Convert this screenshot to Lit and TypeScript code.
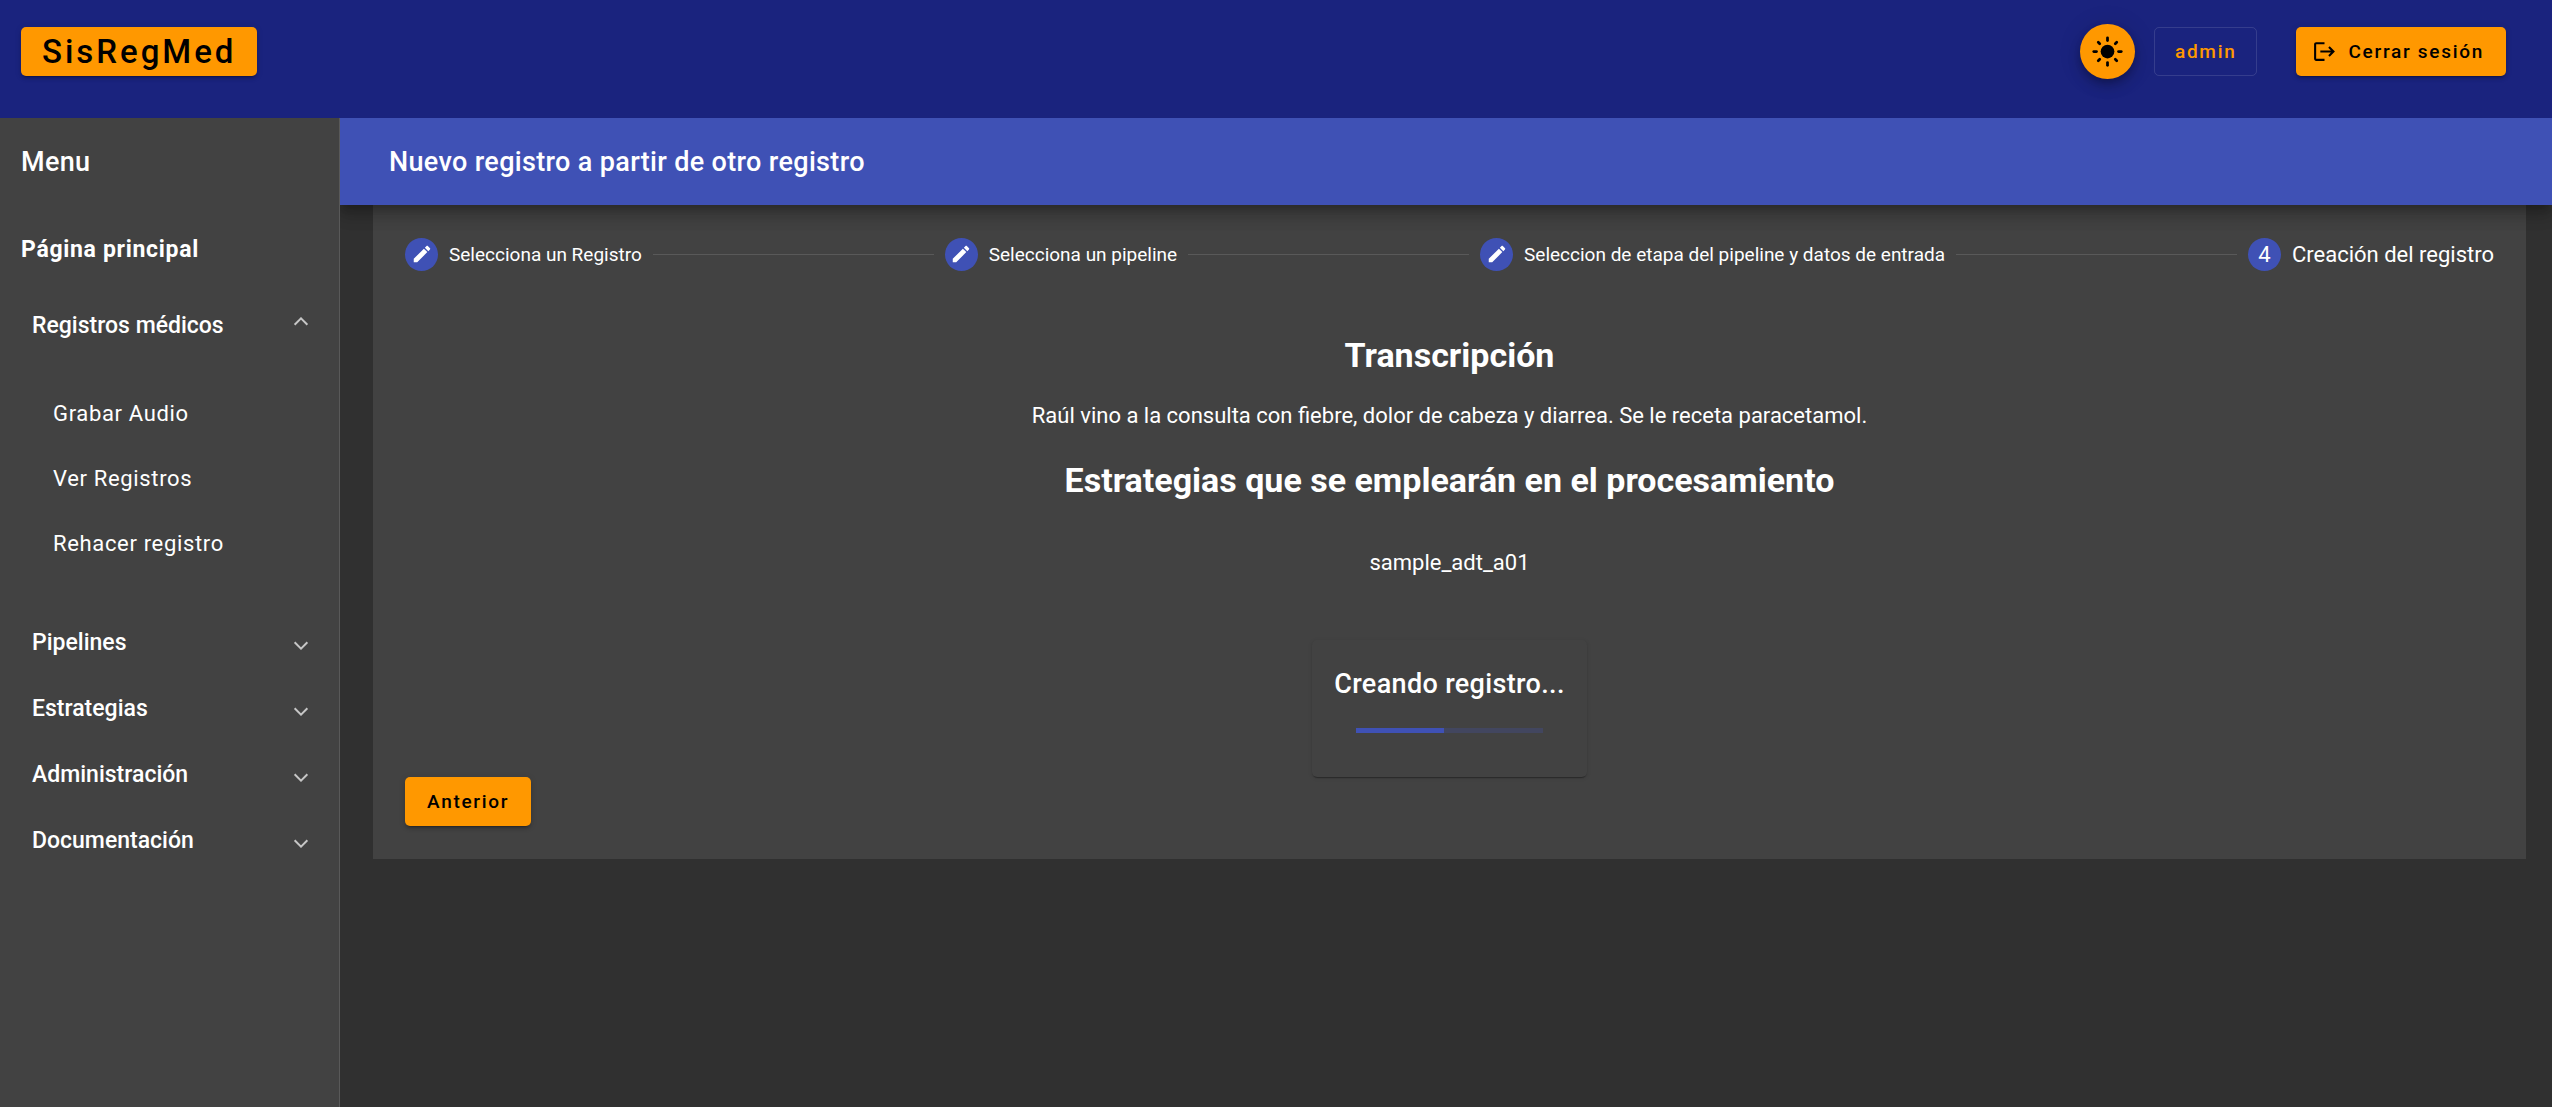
import { LitElement, html, css, svg } from "lit";
import { customElement, state } from "lit/decorators.js";

interface Step {
  label: string;
  done: boolean;
}

interface Section {
  title: string;
  links: string[];
}

const STEPS: Step[] = [
  { label: "Selecciona un Registro", done: true },
  { label: "Selecciona un pipeline", done: true },
  { label: "Seleccion de etapa del pipeline y datos de entrada", done: true },
  { label: "Creación del registro", done: false },
];

const SECTIONS: Section[] = [
  {
    title: "Registros médicos",
    links: ["Grabar Audio", "Ver Registros", "Rehacer registro"],
  },
  { title: "Pipelines", links: [] },
  { title: "Estrategias", links: [] },
  { title: "Administración", links: [] },
  { title: "Documentación", links: [] },
];

const sunIcon = html`<svg class="icon-sun" viewBox="0 0 24 24" aria-hidden="true">
  <circle cx="12" cy="12" r="5" fill="currentColor" />
  ${[0, 90, 180, 270].map(
    (a) => svg`<path d="M12 2v2" transform=${`rotate(${a} 12 12)`}
      stroke="currentColor" stroke-width="2" stroke-linecap="round" />`
  )}
  ${[45, 135, 225, 315].map(
    (a) => svg`<path d="M12 2.5v1.5" transform=${`rotate(${a} 12 12)`}
      stroke="currentColor" stroke-width="2" stroke-linecap="round" />`
  )}
</svg>`;

const logoutIcon = html`<svg class="icon-logout" viewBox="0 0 24 24" aria-hidden="true">
  <path fill="currentColor"
    d="M17 7l-1.41 1.41L18.17 11H8v2h10.17l-2.58 2.58L17 17l5-5zM4 5h8V3H4c-1.1 0-2 .9-2 2v14c0 1.1.9 2 2 2h8v-2H4V5z" />
</svg>`;

const pencilIcon = html`<svg class="icon-pencil" viewBox="0 0 24 24" aria-hidden="true">
  <path fill="currentColor"
    d="M3 17.25V21h3.75L17.81 9.94l-3.75-3.75L3 17.25zM20.71 7.04c.39-.39.39-1.02 0-1.41l-2.34-2.34c-.39-.39-1.02-.39-1.41 0l-1.83 1.83 3.75 3.75 1.83-1.83z" />
</svg>`;

const base = css`
  * {
    box-sizing: border-box;
  }
  h1,
  h2,
  p,
  ul,
  ol {
    margin: 0;
    padding: 0;
    list-style: none;
  }
  a {
    color: inherit;
    text-decoration: none;
  }
  button {
    margin: 0;
    font: inherit;
    cursor: pointer;
  }
  .btn {
    display: inline-flex;
    align-items: center;
    justify-content: center;
    height: 49px;
    padding: 0 22px;
    border: 0;
    border-radius: 5px;
    font-size: 19px;
    font-weight: 500;
    letter-spacing: 0.09em;
    white-space: nowrap;
  }
  .raised {
    background: #ff9800;
    color: #000;
    box-shadow: 0 4px 1px -3px rgba(0, 0, 0, 0.2), 0 3px 3px rgba(0, 0, 0, 0.14),
      0 1px 7px rgba(0, 0, 0, 0.12);
  }
`;

@customElement("app-topbar")
export class AppTopbar extends LitElement {
  static styles = [
    base,
    css`
      :host {
        display: flex;
        align-items: flex-start;
        justify-content: space-between;
        height: 118px;
        padding: 24px 46px 0 21px;
        background: #1a237e;
      }
      .brand {
        margin-top: 3px;
        padding: 0 21px;
        font-size: 33px;
        letter-spacing: 0.09em;
      }
      .tools {
        display: flex;
        align-items: center;
      }
      .theme {
        display: grid;
        place-items: center;
        width: 55px;
        height: 55px;
        margin-right: 19px;
        padding: 0;
        border: 0;
        border-radius: 50%;
        background: #ff9800;
        color: #000;
        box-shadow: 0 4px 7px -1px rgba(0, 0, 0, 0.2), 0 8px 14px rgba(0, 0, 0, 0.14),
          0 1px 25px rgba(0, 0, 0, 0.12);
      }
      .icon-sun {
        width: 33px;
        height: 33px;
      }
      .user {
        margin-right: 39px;
        padding: 0 20px;
        border: 1px solid rgba(255, 255, 255, 0.12);
        background: transparent;
        color: #ff9800;
      }
      .logout {
        gap: 11px;
        padding: 0 22px 0 16px;
      }
      .icon-logout {
        width: 25px;
        height: 25px;
      }
    `,
  ];

  render() {
    return html`
      <button class="btn raised brand" type="button">SisRegMed</button>
      <div class="tools">
        <button class="theme" type="button" aria-label="Cambiar tema">${sunIcon}</button>
        <button class="btn user" type="button">admin</button>
        <button class="btn raised logout" type="button">${logoutIcon}<span>Cerrar sesión</span></button>
      </div>
    `;
  }
}

@customElement("app-sidebar")
export class AppSidebar extends LitElement {
  @state() private open = "Registros médicos";

  static styles = [
    base,
    css`
      :host {
        display: block;
        background: #424242;
        border-right: 1px solid rgba(255, 255, 255, 0.12);
        font-size: 22px;
      }
      .title {
        display: flex;
        align-items: center;
        height: 87px;
        padding: 0 21px;
        font-size: 27px;
        font-weight: 500;
        letter-spacing: 0.0125em;
      }
      nav {
        padding-top: 12px;
      }
      .item {
        display: flex;
        align-items: center;
        height: 65px;
        padding: 0 21px;
        letter-spacing: 0.03em;
      }
      .home {
        font-size: 23px;
        font-weight: 700;
      }
      .toggle {
        display: flex;
        align-items: center;
        justify-content: space-between;
        width: 100%;
        height: 66px;
        padding: 0 33px 0 32px;
        border: 0;
        background: none;
        color: inherit;
        font-size: 23px;
        font-weight: 500;
        text-align: left;
      }
      .toggle.open {
        height: 87px;
      }
      .chevron {
        width: 10px;
        height: 10px;
        margin-top: 2px;
        border: solid rgba(255, 255, 255, 0.7);
        border-width: 0 2px 2px 0;
        transform: rotate(45deg);
      }
      .open .chevron {
        margin: 0 0 4px;
        transform: rotate(225deg);
      }
      .links {
        padding: 12px 32px 33px;
      }
    `,
  ];

  private toggle(title: string) {
    this.open = this.open === title ? "" : title;
  }

  render() {
    return html`
      <div class="title">Menu</div>
      <nav aria-label="Menu">
        <a class="item home" href="#">Página principal</a>
        ${SECTIONS.map((s) => {
          const open = s.title === this.open;
          return html`
            <button class="toggle ${open ? "open" : ""}" type="button"
              aria-expanded=${open} @click=${() => this.toggle(s.title)}>
              <span>${s.title}</span><span class="chevron"></span>
            </button>
            ${open && s.links.length
              ? html`<ul class="links">
                  ${s.links.map((l) => html`<li><a class="item" href="#">${l}</a></li>`)}
                </ul>`
              : null}
          `;
        })}
      </nav>
    `;
  }
}

@customElement("app-stepper")
export class AppStepper extends LitElement {
  static styles = [
    base,
    css`
      :host {
        display: block;
        background: #424242;
        padding: 0 32px 33px;
      }
      .steps {
        display: flex;
        align-items: center;
        height: 98px;
        font-size: 19px;
      }
      .step {
        display: flex;
        align-items: center;
        gap: 11px;
        white-space: nowrap;
      }
      .step:not(.last) {
        flex: auto;
      }
      .step:not(.last)::after {
        content: "";
        flex: 1;
        height: 1px;
        margin-right: 11px;
        background: rgba(255, 255, 255, 0.12);
      }
      .last {
        font-size: 22px;
      }
      .mark {
        display: grid;
        place-items: center;
        flex: none;
        width: 33px;
        height: 33px;
        border-radius: 50%;
        background: #3f51b5;
      }
      .icon-pencil {
        width: 22px;
        height: 22px;
      }
      .body {
        display: flex;
        flex-direction: column;
        align-items: center;
        padding-top: 32px;
        font-size: 22px;
        line-height: 26px;
        text-align: center;
      }
      h2 {
        font-size: 34px;
        font-weight: 700;
        line-height: 40px;
      }
      .transcript {
        margin: 28px 0 31px;
      }
      .strategy {
        margin: 50px 0 64px;
      }
      .progress {
        padding: 22px 22px 44px;
        border-radius: 5px;
        box-shadow: 0 3px 1px -2px rgba(0, 0, 0, 0.2), 0 1px 1px rgba(0, 0, 0, 0.14),
          0 1px 4px rgba(0, 0, 0, 0.12);
      }
      .progress-title {
        font-size: 27px;
        font-weight: 500;
        line-height: 44px;
        letter-spacing: 0.0125em;
      }
      .track {
        height: 5px;
        margin: 22px 22px 0;
        background: #42465f;
      }
      .fill {
        height: 100%;
        background: #3f51b5;
      }
    `,
  ];

  private progress = 47;

  render() {
    return html`
      <ol class="steps">
        ${STEPS.map(
          (s, i) => html`<li class="step ${i === STEPS.length - 1 ? "last" : ""}">
            <span class="mark">${s.done ? pencilIcon : i + 1}</span>
            <span>${s.label}</span>
          </li>`
        )}
      </ol>
      <div class="body">
        <h2>Transcripción</h2>
        <p class="transcript">
          Raúl vino a la consulta con fiebre, dolor de cabeza y diarrea. Se le receta paracetamol.
        </p>
        <h2>Estrategias que se emplearán en el procesamiento</h2>
        <p class="strategy">sample_adt_a01</p>
        <section class="progress">
          <div class="progress-title" id="progress-title">Creando registro...</div>
          <div class="track" role="progressbar" aria-labelledby="progress-title">
            <div class="fill" style="width: ${this.progress}%"></div>
          </div>
        </section>
      </div>
      <button class="btn raised" type="button">Anterior</button>
    `;
  }
}

@customElement("app-root")
export class AppRoot extends LitElement {
  static styles = [
    base,
    css`
      :host {
        display: flex;
        flex-direction: column;
        min-height: 100vh;
        background: #303030;
        color: #fff;
        font-family: Roboto, "Liberation Sans", sans-serif;
      }
      .layout {
        flex: 1;
        display: grid;
        grid-template-columns: 340px minmax(0, 1fr);
      }
      .toolbar {
        position: relative;
        z-index: 1;
        display: flex;
        align-items: center;
        height: 87px;
        padding: 0 49px;
        background: #3f51b5;
        font-size: 27px;
        font-weight: 500;
        letter-spacing: 0.0125em;
        box-shadow: 0 7px 7px -4px rgba(0, 0, 0, 0.2), 0 11px 14px 1px rgba(0, 0, 0, 0.14),
          0 4px 19px 3px rgba(0, 0, 0, 0.12);
      }
      main {
        overflow: hidden;
      }
      h1 {
        font: inherit;
      }
      .content {
        padding: 0 26px 33px 33px;
      }
    `,
  ];

  render() {
    return html`
      <app-topbar></app-topbar>
      <div class="layout">
        <app-sidebar></app-sidebar>
        <main>
          <header class="toolbar"><h1>Nuevo registro a partir de otro registro</h1></header>
          <div class="content"><app-stepper></app-stepper></div>
        </main>
      </div>
    `;
  }
}
